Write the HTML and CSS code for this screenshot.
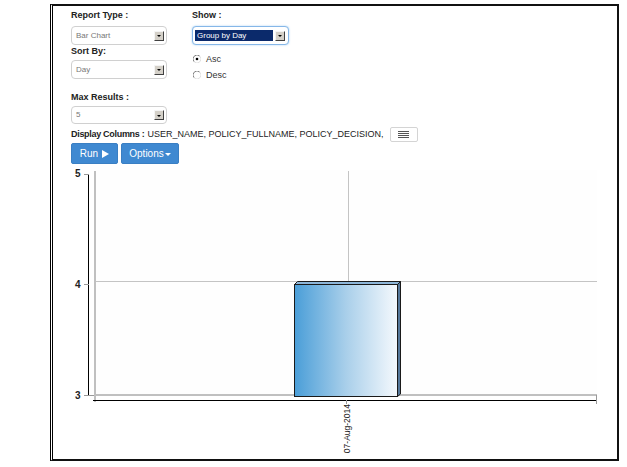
FILE: index.html
```html
<!DOCTYPE html>
<html>
<head>
<meta charset="utf-8">
<link rel="stylesheet" href="styles.css">
</head>
<body>
<div class="frame">
  <div class="form-row">
    <div class="col col-left">
      <div class="label">Report Type :</div>
      <div class="select sel-first">
        <span class="sel-text">Bar Chart</span>
        <span class="dd-btn"><span class="dd-arrow"></span></span>
      </div>
      <div class="label label-sort">Sort By:</div>
      <div class="select sel-sort">
        <span class="sel-text">Day</span>
        <span class="dd-btn"><span class="dd-arrow"></span></span>
      </div>
      <div class="label label-max">Max Results :</div>
      <div class="select sel-max">
        <span class="sel-text">5</span>
        <span class="dd-btn"><span class="dd-arrow"></span></span>
      </div>
    </div>
    <div class="col col-right">
      <div class="label">Show :</div>
      <div class="select sel-first sel-focus">
        <span class="sel-highlight">Group by Day</span>
        <span class="dd-btn"><span class="dd-arrow"></span></span>
      </div>
      <div class="radio-row radio-asc">
        <svg class="radio" width="8" height="8" viewBox="0 0 8 8">
          <circle cx="4" cy="4" r="3.5" fill="#fff"/>
          <path d="M1.2 6.8 A3.5 3.5 0 0 1 6.8 1.2" fill="none" stroke="#808080" stroke-width="1"/>
          <path d="M6.8 1.2 A3.5 3.5 0 0 1 1.2 6.8" fill="none" stroke="#e0e0e0" stroke-width="1"/>
          <circle cx="4" cy="4" r="1.3" fill="#000"/>
        </svg>
        <span class="radio-text">Asc</span>
      </div>
      <div class="radio-row radio-desc">
        <svg class="radio" width="8" height="8" viewBox="0 0 8 8">
          <circle cx="4" cy="4" r="3.5" fill="#fff"/>
          <path d="M1.2 6.8 A3.5 3.5 0 0 1 6.8 1.2" fill="none" stroke="#808080" stroke-width="1"/>
          <path d="M6.8 1.2 A3.5 3.5 0 0 1 1.2 6.8" fill="none" stroke="#e0e0e0" stroke-width="1"/>
        </svg>
        <span class="radio-text">Desc</span>
      </div>
    </div>
  </div>
  <div class="columns-row">
    <span class="columns-label">Display Columns :</span>
    <span class="columns-value">USER_NAME, POLICY_FULLNAME, POLICY_DECISION,</span>
    <span class="menu-btn">
      <svg width="11" height="7" viewBox="0 0 11 7">
        <rect x="0" y="0" width="11" height="1" fill="#555"/>
        <rect x="0" y="2" width="11" height="1" fill="#555"/>
        <rect x="0" y="4" width="11" height="1" fill="#555"/>
        <rect x="0" y="6" width="11" height="1" fill="#555"/>
      </svg>
    </span>
  </div>
  <div class="buttons-row">
    <span class="btn btn-run">Run
      <svg class="run-icon" width="7" height="8" viewBox="0 0 7 8"><path d="M0 0 L7 4 L0 8 Z" fill="#fff"/></svg>
    </span>
    <span class="btn btn-options">Options<span class="caret"></span></span>
  </div>
  <svg class="chart" width="540" height="290" viewBox="0 0 540 290">
    <defs>
      <linearGradient id="barGrad" x1="0" y1="0" x2="1" y2="0">
        <stop offset="0" stop-color="#4a9ed8"/>
        <stop offset="0.5" stop-color="#a9cfea"/>
        <stop offset="1" stop-color="#f5f9fd"/>
      </linearGradient>
    </defs>
    <!-- plot area -->
    <rect x="24" y="6" width="502" height="225" fill="#fefefe"/>
    <!-- gridlines -->
    <line x1="24" y1="117.5" x2="526" y2="117.5" stroke="#c4c4c4" stroke-width="1"/>
    <line x1="277.5" y1="7" x2="277.5" y2="117" stroke="#c4c4c4" stroke-width="1"/>
    <!-- plot left wall -->
    <rect x="23" y="7" width="2" height="231" fill="#c0c0c0"/>
    <!-- bottom floor -->
    <rect x="23" y="230" width="503" height="2" fill="#c0c0c0"/>
    <!-- y axis -->
    <line x1="17.5" y1="10" x2="17.5" y2="232" stroke="#000" stroke-width="1"/>
    <line x1="13" y1="10.5" x2="18" y2="10.5" stroke="#999" stroke-width="1"/>
    <line x1="13" y1="120.5" x2="18" y2="120.5" stroke="#999" stroke-width="1"/>
    <line x1="13" y1="231.5" x2="23" y2="231.5" stroke="#999" stroke-width="1"/>
    <text x="4" y="13" class="axis-label">5</text>
    <text x="4" y="124" class="axis-label">4</text>
    <text x="4" y="235" class="axis-label">3</text>
    <!-- x axis -->
    <line x1="22" y1="236.5" x2="526" y2="236.5" stroke="#000" stroke-width="1"/>
    <line x1="525.5" y1="231" x2="525.5" y2="240" stroke="#999" stroke-width="1"/>
    <line x1="275.5" y1="236" x2="275.5" y2="240" stroke="#999" stroke-width="1"/>
    <!-- bar -->
    <path d="M223.5 120.5 L226.5 117.5 L329.5 117.5 L326.5 120.5 Z" fill="#8db6d9" stroke="#1a1a1a" stroke-width="1"/>
    <path d="M326.5 120.5 L329.5 117.5 L329.5 230 L326.5 232.5 Z" fill="#56789a" stroke="#1a1a1a" stroke-width="1"/>
    <rect x="223.5" y="120.5" width="103" height="112" fill="url(#barGrad)" stroke="#1a1a1a" stroke-width="1"/>
    <text class="x-label" x="278.5" y="240" transform="rotate(-90 278.5 240)" text-anchor="end">07-Aug-2014</text>
  </svg>
</div>
</body>
</html>
```

FILE: styles.css
```css
html, body {
  margin: 0;
  padding: 0;
  background: #fff;
}

body {
  font-family: "Liberation Sans", Arial, sans-serif;
  color: #333;
}

.frame {
  margin: 4px 0 0 50px;
  width: 569px;
  height: 457px;
  box-sizing: border-box;
  border: 2px solid #111;
  border-left: 3px double #000;
  padding: 4px 0 0 18px;
  background: #fff;
}

.form-row {
  display: flex;
  align-items: flex-start;
  gap: 25px;
}

.col-left {
  width: 96px;
}

.col-right {
  width: 97px;
}

.label {
  font-size: 9px;
  font-weight: bold;
  line-height: 11px;
  height: 11px;
  color: #222;
}

.label-sort {
  margin-top: 1px;
}

.label-max {
  margin-top: 13px;
}

.select {
  box-sizing: border-box;
  height: 19px;
  border: 1px solid #d0d0d0;
  border-radius: 4px;
  background: #fff;
  display: flex;
  align-items: center;
  justify-content: space-between;
  padding: 0 2px 0 4px;
}

.sel-first {
  margin-top: 5px;
}

.sel-sort {
  margin-top: 3px;
}

.sel-max {
  margin-top: 3px;
  height: 18px;
}

.sel-text {
  font-size: 8px;
  color: #777;
  line-height: 10px;
}

.sel-focus {
  border-color: #86b7e8;
  box-shadow: 0 0 2px rgba(102, 175, 233, 0.6);
  padding: 0 3px 0 2px;
}

.sel-highlight {
  width: 78px;
  height: 11px;
  background: #0b2a6b;
  color: #fff;
  font-size: 8px;
  line-height: 11px;
  padding-left: 2px;
  box-sizing: border-box;
}

.dd-btn {
  box-sizing: border-box;
  width: 10px;
  height: 10px;
  background: #d4d0c8;
  border: 1px solid;
  border-color: #f4f4f4 #404040 #404040 #f4f4f4;
  display: flex;
  align-items: center;
  justify-content: center;
}

.dd-arrow {
  width: 0;
  height: 0;
  border-left: 2px solid transparent;
  border-right: 2px solid transparent;
  border-top: 2px solid #000;
  margin-top: 1px;
}

.radio-row {
  display: flex;
  align-items: center;
  height: 12px;
  gap: 5px;
  padding-left: 1px;
}

.radio-asc {
  margin-top: 8px;
}

.radio-desc {
  margin-top: 4px;
}

.radio {
  display: block;
  flex: none;
}

.radio-text {
  font-size: 9px;
  color: #333;
  line-height: 11px;
}

.columns-row {
  margin-top: 2px;
  height: 16px;
  display: flex;
  align-items: center;
  font-size: 9px;
  color: #222;
}

.columns-label {
  font-weight: bold;
  margin-right: 3px;
  letter-spacing: -0.3px;
}

.columns-value {
  white-space: nowrap;
}

.menu-btn {
  box-sizing: border-box;
  margin-left: 6px;
  width: 28px;
  height: 15px;
  border: 1px solid #d4d4d4;
  border-radius: 2px;
  display: flex;
  align-items: center;
  justify-content: center;
  background: #fff;
}

.menu-btn svg {
  display: block;
}

.buttons-row {
  margin-top: 1px;
  display: flex;
  gap: 3px;
  height: 21px;
}

.btn {
  box-sizing: border-box;
  height: 21px;
  background: #3f89d1;
  border: 1px solid #3a7fc3;
  border-radius: 2px;
  color: #fff;
  font-size: 10px;
  display: flex;
  align-items: center;
  justify-content: center;
}

.btn-run {
  width: 47px;
  gap: 4px;
}

.run-icon {
  display: block;
}

.btn-options {
  width: 58px;
}

.caret {
  width: 0;
  height: 0;
  border-left: 3px solid transparent;
  border-right: 3px solid transparent;
  border-top: 3px solid #fff;
  margin-left: 1px;
  margin-top: 2px;
}

.chart {
  display: block;
}

.axis-label {
  font-family: "Liberation Sans", Arial, sans-serif;
  font-size: 10px;
  font-weight: bold;
  fill: #222;
}

.x-label {
  font-family: "Liberation Sans", Arial, sans-serif;
  font-size: 8.5px;
  fill: #222;
}
```
